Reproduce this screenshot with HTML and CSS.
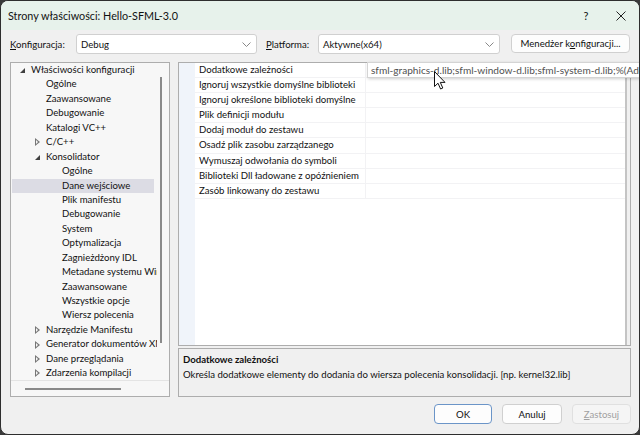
FILE: index.html
```html
<!DOCTYPE html>
<html lang="pl">
<head>
  <meta charset="UTF-8">
  <title>Strony właściwości: Hello-SFML-3.0</title>
  <link rel="stylesheet" href="styles.css">
</head>
<body>

  <div class="window">

    <!-- Title bar -->
    <div class="titlebar">
      <span class="title">Strony właściwości: Hello-SFML-3.0</span>
      <span class="tb-btn">?</span>
      <span class="tb-btn tb-close">
        <svg width="10" height="10" viewBox="0 0 10 10"><path d="M0.5 0.5 L9.5 9.5 M9.5 0.5 L0.5 9.5" stroke="#222" stroke-width="1"/></svg>
      </span>
    </div>

    <!-- Configuration row -->
    <div class="config-row">
      <span class="lbl"><u>K</u>onfiguracja:</span>
      <div class="combo combo-config">
        <span>Debug</span>
        <svg class="chevron" width="9" height="5" viewBox="0 0 9 5"><path d="M0.5 0.5 L4.5 4.5 L8.5 0.5" fill="none" stroke="#888" stroke-width="1"/></svg>
      </div>
      <span class="lbl lbl-platform"><u>P</u>latforma:</span>
      <div class="combo combo-platform">
        <span>Aktywne(x64)</span>
        <svg class="chevron" width="9" height="5" viewBox="0 0 9 5"><path d="M0.5 0.5 L4.5 4.5 L8.5 0.5" fill="none" stroke="#888" stroke-width="1"/></svg>
      </div>
      <button class="btn btn-manager">Menedżer k<u>o</u>nfiguracji...</button>
    </div>

    <div class="main">

      <!-- Tree -->
      <div class="tree">
        <ul class="tree-list">
          <li class="lvl1"><span class="arrow open"></span>Właściwości konfiguracji</li>
          <li class="lvl2"><span class="arrow"></span>Ogólne</li>
          <li class="lvl2"><span class="arrow"></span>Zaawansowane</li>
          <li class="lvl2"><span class="arrow"></span>Debugowanie</li>
          <li class="lvl2"><span class="arrow"></span>Katalogi VC++</li>
          <li class="lvl2"><span class="arrow closed"></span>C/C++</li>
          <li class="lvl2"><span class="arrow open"></span>Konsolidator</li>
          <li class="lvl3"><span class="arrow"></span>Ogólne</li>
          <li class="lvl3 selected"><span class="arrow"></span>Dane wejściowe</li>
          <li class="lvl3"><span class="arrow"></span>Plik manifestu</li>
          <li class="lvl3"><span class="arrow"></span>Debugowanie</li>
          <li class="lvl3"><span class="arrow"></span>System</li>
          <li class="lvl3"><span class="arrow"></span>Optymalizacja</li>
          <li class="lvl3"><span class="arrow"></span>Zagnieżdżony IDL</li>
          <li class="lvl3"><span class="arrow"></span>Metadane systemu Windows</li>
          <li class="lvl3"><span class="arrow"></span>Zaawansowane</li>
          <li class="lvl3"><span class="arrow"></span>Wszystkie opcje</li>
          <li class="lvl3"><span class="arrow"></span>Wiersz polecenia</li>
          <li class="lvl2"><span class="arrow closed"></span>Narzędzie Manifestu</li>
          <li class="lvl2"><span class="arrow closed"></span>Generator dokumentów XML</li>
          <li class="lvl2"><span class="arrow closed"></span>Dane przeglądania</li>
          <li class="lvl2"><span class="arrow closed"></span>Zdarzenia kompilacji</li>
        </ul>
        <div class="vscroll"><div class="vthumb"></div></div>
        <div class="hscroll"><div class="hthumb"></div></div>
      </div>

      <div class="right">

        <!-- Property grid -->
        <div class="grid">
          <div class="grid-margin"></div>
          <div class="grid-rows">
            <div class="prop"><span class="pname">Dodatkowe zależności</span><span class="pval"></span></div>
            <div class="prop"><span class="pname">Ignoruj wszystkie domyślne biblioteki</span><span class="pval"></span></div>
            <div class="prop"><span class="pname">Ignoruj określone biblioteki domyślne</span><span class="pval"></span></div>
            <div class="prop"><span class="pname">Plik definicji modułu</span><span class="pval"></span></div>
            <div class="prop"><span class="pname">Dodaj moduł do zestawu</span><span class="pval"></span></div>
            <div class="prop"><span class="pname">Osadź plik zasobu zarządzanego</span><span class="pval"></span></div>
            <div class="prop"><span class="pname">Wymuszaj odwołania do symboli</span><span class="pval"></span></div>
            <div class="prop"><span class="pname">Biblioteki Dll ładowane z opóźnieniem</span><span class="pval"></span></div>
            <div class="prop"><span class="pname">Zasób linkowany do zestawu</span><span class="pval"></span></div>
          </div>
          <div class="grid-scroll"></div>

          <div class="tooltip">sfml-graphics-d.lib;sfml-window-d.lib;sfml-system-d.lib;%(AdditionalDependencies)</div>
          <svg class="cursor" width="12" height="19" viewBox="0 0 12 19">
            <path d="M0.5 0.5 L0.5 15.5 L4 12.2 L6.6 18 L8.8 17 L6.3 11.4 L11 11.4 Z" fill="#fff" stroke="#111" stroke-width="1" stroke-linejoin="round"/>
          </svg>
        </div>

        <!-- Description -->
        <div class="desc">
          <div class="desc-title">Dodatkowe zależności</div>
          <div class="desc-text">Określa dodatkowe elementy do dodania do wiersza polecenia konsolidacji. [np. kernel32.lib]</div>
        </div>

      </div>
    </div>

    <!-- Buttons -->
    <div class="footer">
      <button class="btn btn-ok">OK</button>
      <button class="btn btn-cancel">Anuluj</button>
      <button class="btn btn-apply" disabled><u>Z</u>astosuj</button>
    </div>

  </div>

</body>
</html>
```

FILE: styles.css
```css
body {
  margin: 0;
  background-color: #3a3a3a;
  font-family: Lato, "Noto Sans", sans-serif;
  font-size: 9.6px;
  color: #111;
  overflow: hidden;
}

.window {
  width: 640px;
  height: 435px;
  box-sizing: border-box;
  border: 1px solid #2e2e2e;
  border-radius: 8px;
  background-color: #f0f0f0;
  overflow: hidden;
  display: flex;
  flex-direction: column;
}

/* title bar */
.titlebar {
  height: 29px;
  flex-shrink: 0;
  display: flex;
  align-items: center;
  background-color: #e7f2eb;
  padding-left: 7px;
}

.title {
  flex: 1;
  font-size: 10.8px;
}

.tb-btn {
  width: 36px;
  text-align: center;
  font-size: 11px;
}

.tb-close {
  display: flex;
  justify-content: center;
  margin-left: -1px;
}

/* config row */
.config-row {
  height: 32px;
  box-sizing: border-box;
  padding: 0 0 4px 9px;
  display: flex;
  align-items: center;
  flex-shrink: 0;
}

.lbl {
  width: 66px;
}

.lbl-platform {
  width: 52px;
  margin-left: 9px;
}

.combo {
  height: 20px;
  box-sizing: border-box;
  background-color: #fff;
  border: 1px solid #d0d0d0;
  border-radius: 3px;
  display: flex;
  align-items: center;
  justify-content: space-between;
  padding: 0 5px 0 4px;
}

.combo-config {
  width: 181px;
}

.combo-platform {
  width: 182px;
}

.btn {
  font-family: inherit;
  font-size: 9.6px;
  color: #111;
  background-color: #fdfdfd;
  border: 1px solid #d0d0d0;
  border-radius: 4px;
  padding: 0;
  height: 20px;
}

.btn-manager {
  width: 119px;
  margin-left: 11px;
  height: 19px;
  margin-top: -2px;
}

/* main area */
.main {
  height: 335px;
  flex-shrink: 0;
  display: flex;
  gap: 8px;
  padding-left: 9px;
}

.tree {
  width: 160px;
  box-sizing: border-box;
  border: 1px solid #adadad;
  background-color: #f7f7f7;
  display: grid;
  grid-template-columns: 1fr 12px;
  grid-template-rows: 1fr 16px;
}

.tree-list {
  list-style: none;
  margin: 0;
  padding: 0 0 0 1px;
  overflow: hidden;
}

.tree-list li {
  height: 14.45px;
  line-height: 14.45px;
  white-space: nowrap;
  display: flex;
  align-items: center;
  margin-right: 3px;
}

.tree-list .lvl1 { padding-left: 7px; }
.tree-list .lvl2 { padding-left: 22px; }
.tree-list .lvl3 { padding-left: 38px; }

.tree-list li.selected {
  background-color: #dcdce4;
}

.arrow {
  width: 12px;
  height: 8px;
  flex-shrink: 0;
  position: relative;
}

.arrow.open::before {
  content: "";
  position: absolute;
  left: 1px;
  top: 2px;
  border-style: solid;
  border-width: 0 0 5px 5px;
  border-color: transparent transparent #404040 transparent;
}

.arrow.closed::before {
  content: "";
  position: absolute;
  left: 1px;
  top: 0;
  width: 0;
  height: 0;
  border-style: solid;
  border-width: 4px 0 4px 5px;
  border-color: transparent transparent transparent #777;
}

.arrow.closed::after {
  content: "";
  position: absolute;
  left: 2px;
  top: 2px;
  border-style: solid;
  border-width: 2px 0 2px 2.5px;
  border-color: transparent transparent transparent #f7f7f7;
}

.vscroll {
  position: relative;
}

.vthumb {
  margin: 14px 0 0 3px;
  width: 2px;
  height: 266px;
  background-color: #8a8a8a;
}

.hscroll {
  grid-column: 1 / 3;
  border-top: 1px solid #e4e4e4;
}

.hthumb {
  margin: 7px 0 0 14px;
  width: 96px;
  height: 2px;
  background-color: #8a8a8a;
}

.right {
  width: 453px;
  display: flex;
  flex-direction: column;
  gap: 2px;
}

/* property grid */
.grid {
  height: 285px;
  box-sizing: border-box;
  border: 1px solid #adadad;
  background-color: #fff;
  display: flex;
  position: relative;
}

.grid-margin {
  width: 16px;
  background-color: #f0f4fa;
}

.grid-rows {
  flex: 1;
}

.prop {
  height: 15.1px;
  box-sizing: border-box;
  border-bottom: 1px solid #f2f2f4;
  display: flex;
  align-items: center;
  white-space: nowrap;
}

.pname {
  width: 171px;
  padding-left: 4px;
  box-sizing: border-box;
  height: 100%;
  line-height: 14px;
  border-right: 1px solid #f2f2f4;
}

.pval {
  flex: 1;
}

.grid-scroll {
  width: 3px;
  border-left: 2px solid #c4c4c4;
  background-color: #f0f0f0;
}

.tooltip {
  position: absolute;
  left: 188px;
  top: -1px;
  height: 16px;
  box-sizing: border-box;
  padding: 0 3px;
  font-size: 10.1px;
  line-height: 14px;
  background-color: #fff;
  border: 1px solid #d4d4d4;
  box-shadow: 1px 1px 3px rgba(0, 0, 0, 0.2);
  color: #505050;
  white-space: nowrap;
}

.cursor {
  position: absolute;
  left: 255px;
  top: 8px;
}

/* description */
.desc {
  height: 49px;
  box-sizing: border-box;
  border: 1px solid #adadad;
  padding: 3px 4px;
}

.desc-title {
  font-weight: bold;
  line-height: 15px;
}

.desc-text {
  line-height: 15px;
}

/* footer */
.footer {
  display: flex;
  justify-content: flex-end;
  gap: 10px;
  padding: 7px 8px 0 0;
}

.btn-ok {
  width: 58px;
  border-color: #6b95c8;
}

.btn-cancel {
  width: 60px;
}

.btn-apply {
  width: 59px;
  color: #a0a0a0;
  background-color: #f5f5f5;
  border-color: #e0e0e0;
}
```
